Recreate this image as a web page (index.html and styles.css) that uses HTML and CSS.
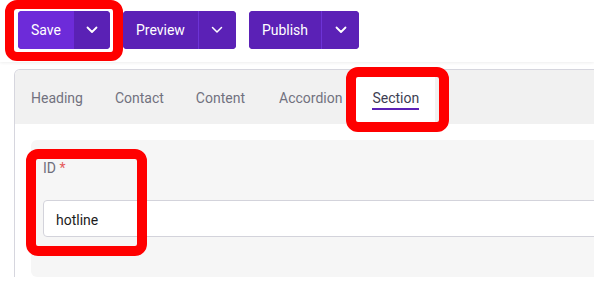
FILE: index.html
```html
<!DOCTYPE html>
<html lang="en">
<head>
<meta charset="utf-8">
<title>Section editor</title>
<link rel="stylesheet" href="styles.css">
</head>
<body>
<div class="page">
  <header class="toolbar">
    <div class="btn-group btn-group--primary">
      <button class="btn-main">Save</button>
      <button class="btn-drop" aria-label="More save options">
        <svg width="12" height="8" viewBox="0 0 12 8"><path d="M1.5 1.5 L6 6 L10.5 1.5" fill="none" stroke="#fff" stroke-width="1.8" stroke-linecap="round" stroke-linejoin="round"/></svg>
      </button>
    </div>
    <div class="btn-group">
      <button class="btn-main">Preview</button>
      <button class="btn-drop" aria-label="More preview options">
        <svg width="12" height="8" viewBox="0 0 12 8"><path d="M1.5 1.5 L6 6 L10.5 1.5" fill="none" stroke="#fff" stroke-width="1.5" stroke-linecap="round" stroke-linejoin="round"/></svg>
      </button>
    </div>
    <div class="btn-group">
      <button class="btn-main">Publish</button>
      <button class="btn-drop" aria-label="More publish options">
        <svg width="12" height="8" viewBox="0 0 12 8"><path d="M1.5 1.5 L6 6 L10.5 1.5" fill="none" stroke="#fff" stroke-width="1.8" stroke-linecap="round" stroke-linejoin="round"/></svg>
      </button>
    </div>
  </header>

  <section class="card">
    <nav class="tabs">
      <div class="tab"><span class="tab-label">Heading</span></div>
      <div class="tab"><span class="tab-label">Contact</span></div>
      <div class="tab"><span class="tab-label">Content</span></div>
      <div class="tab tab--wide"><span class="tab-label">Accordion</span></div>
      <div class="tab tab--active"><span class="tab-label">Section</span></div>
    </nav>
    <div class="card-body">
      <div class="panel">
        <label class="field-label" for="sec-id">ID <span class="req">*</span></label>
        <input id="sec-id" class="field-input" type="text" value="hotline">
      </div>
    </div>
  </section>

  <div class="mark mark--save"></div>
  <div class="mark mark--tab"></div>
  <div class="mark mark--field"></div>
</div>
</body>
</html>
```

FILE: styles.css
```css
* { box-sizing: border-box; }

html, body {
  margin: 0;
  padding: 0;
  background: #ffffff;
}

body {
  width: 594px;
  height: 282px;
  overflow: hidden;
  font-family: Roboto, "Liberation Sans", sans-serif;
}

.page {
  position: relative;
  width: 594px;
  height: 282px;
  overflow: hidden;
}

.toolbar {
  height: 62px;
  display: flex;
  align-items: flex-start;
  gap: 13px;
  padding: 11px 0 0 18px;
  background: #fff;
  box-shadow: 0 1px 3px rgba(0, 0, 0, 0.07);
  position: relative;
  z-index: 1;
}

.btn-group {
  display: flex;
  height: 38px;
  border-radius: 4px;
  overflow: hidden;
  background: #5b21b6;
}

.btn-main,
.btn-drop {
  border: 0;
  margin: 0;
  height: 38px;
  color: #fff;
  background: #5b21b6;
  font-family: Roboto, "Liberation Sans", sans-serif;
  font-size: 14px;
  font-weight: 400;
  display: flex;
  align-items: center;
  justify-content: center;
}

.btn-main {
  padding: 0 13px;
}

.btn-drop {
  width: 38px;
  padding: 0;
  border-left: 1px solid #6d33d6;
}

.btn-group--primary .btn-main {
  background: #6d2bd9;
}

.btn-group--primary .btn-drop {
  width: 36px;
  border-left: 0;
  background: #5a21b5;
}

.card {
  margin: 7px 0 0 14px;
  width: 720px;
  border: 1px solid #d6d6de;
  border-bottom: 0;
  border-radius: 6px 6px 0 0;
  overflow: hidden;
}

.tabs {
  display: flex;
  height: 54px;
  background: #f1f1f1;
}

.tab {
  padding: 18px 16px 0;
}

.tab--wide {
  padding: 18px 14px 0 18px;
}

.tab-label {
  display: inline-block;
  font-size: 14px;
  line-height: 16px;
  color: #71717f;
  padding-bottom: 2px;
  border-bottom: 2px solid transparent;
}

.tab--active {
  background: #ffffff;
}

.tab--active .tab-label {
  color: #3d3d52;
  border-bottom-color: #5b21b6;
}

.card-body {
  padding: 16px 16px 0;
  background: #fff;
}

.panel {
  background: #f6f6f6;
  border-radius: 6px;
  padding: 20px 12px 40px;
}

.field-label {
  display: block;
  font-size: 14px;
  line-height: 16px;
  color: #6e6e7c;
  margin-bottom: 24px;
}

.req {
  color: #e55a5a;
}

.field-input {
  display: block;
  width: 100%;
  height: 37px;
  border: 1px solid #d3d3db;
  border-radius: 4px;
  background: #fff;
  padding: 2px 12px 0;
  font-family: Roboto, "Liberation Sans", sans-serif;
  font-size: 14px;
  color: #1c1c1c;
  outline: none;
}

.mark {
  position: absolute;
  border: 10px solid #ff0000;
  border-radius: 12px;
  z-index: 5;
  pointer-events: none;
}

.mark--save {
  left: 5px;
  top: 0;
  width: 118px;
  height: 61px;
  border-width: 9px 10px 9px 9px;
}

.mark--tab {
  left: 346px;
  top: 67px;
  width: 103px;
  height: 65px;
}

.mark--field {
  left: 26px;
  top: 149px;
  width: 121px;
  height: 107px;
}
```
